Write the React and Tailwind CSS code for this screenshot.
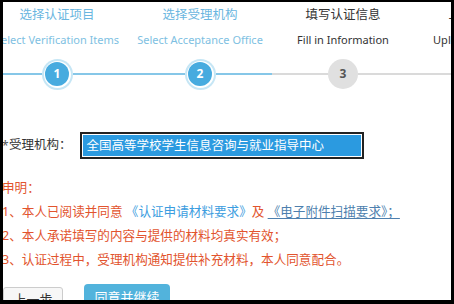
import React from "react";

const steps = [
  { zh: "选择认证项目", en: "Select Verification Items", n: 1, state: "done" },
  { zh: "选择受理机构", en: "Select Acceptance Office", n: 2, state: "done" },
  { zh: "填写认证信息", en: "Fill in Information", n: 3, state: "current" },
  { zh: "上传电子附件", en: "Upload Attachments", n: 4, state: "todo" },
];

function Step({ s, idx }) {
  const done = s.state === "done";
  const zhColor = done ? "text-[#6ab6e0]" : "text-[#333]";
  const enColor = done ? "text-[#7ebfe2]" : "text-[#333]";
  const leftLine = done ? "bg-[#86c7e8]" : "bg-[#dadada]";
  const rightLine = idx <= 1 ? "bg-[#86c7e8]" : "bg-[#dadada]";
  return (
    <div className="w-[143px] shrink-0 flex flex-col items-center">
      <div className={`mt-[4px] h-[18px] leading-[18px] text-[12.5px] whitespace-nowrap ${zhColor}`}>{s.zh}</div>
      <div className={`mt-[8px] h-[16px] leading-[16px] text-[11px] whitespace-nowrap ${enColor}`}>{s.en}</div>
      <div className="mt-[10px] h-[32px] w-full flex items-center">
        <div className={`flex-1 h-[2px] ${leftLine}`}></div>
        {done ? (
          <div className="w-[31px] h-[31px] rounded-full bg-[#c6e6f5] flex items-center justify-center">
            <div className="w-[27px] h-[27px] rounded-full bg-white flex items-center justify-center">
              <div className="w-[24px] h-[24px] rounded-full bg-[#47abdf] flex items-center justify-center text-white text-[12px] font-bold leading-none">
                {s.n}
              </div>
            </div>
          </div>
        ) : (
          <div className="w-[30px] h-[30px] rounded-full bg-[#e0e0e0] flex items-center justify-center text-[#555] text-[12px] font-bold leading-none">
            {s.n}
          </div>
        )}
        <div className={`flex-1 h-[2px] ${rightLine}`}></div>
      </div>
    </div>
  );
}

export default function App() {
  return (
    <div className="w-[454px] h-[304px] bg-black pt-[2px] pl-[3px] pr-[3px] pb-[4px]">
      <div
        className="w-full h-full bg-white overflow-hidden"
        style={{ fontFamily: '"Noto Sans", "Noto Sans CJK SC", sans-serif' }}
      >
        <div className="flex ml-[-17.5px]">
          {steps.map((s, i) => (
            <Step key={i} s={s} idx={i} />
          ))}
        </div>

        <div className="mt-[42px] flex items-center h-[27px]">
          <span className="w-[7px] text-[#555] text-[12px] leading-none ml-[-1px]">*</span>
          <span className="text-[12.5px] text-[#333] whitespace-nowrap">受理机构：</span>
          <div className="ml-[8px] w-[284px] h-[27px] border-2 border-[#222] bg-white p-[1px] shrink-0">
            <div className="h-full bg-[#2b9ae0] text-white text-[12.5px] leading-[21px] pl-[4px] whitespace-nowrap">
              全国高等学校学生信息咨询与就业指导中心
            </div>
          </div>
        </div>

        <div className="mt-[17px] ml-[-1px] text-[12.6px] leading-[24px] text-[#e2542e] whitespace-nowrap">
          <div>申明：</div>
          <div>
            1、本人已阅读并同意 <span className="text-[#3c9de0]">《认证申请材料要求》</span>及{" "}
            <span className="text-[#4d7fae] underline underline-offset-2">《电子附件扫描要求》；</span>
          </div>
          <div>2、本人承诺填写的内容与提供的材料均真实有效；</div>
          <div>3、认证过程中，受理机构通知提供补充材料，本人同意配合。</div>
        </div>

        <div className="mt-[12px] flex items-start">
          <button className="mt-[3px] w-[60px] h-[24px] border border-[#ccc] rounded-[3px] bg-[#f7f7f7] text-[13px] leading-[22px] text-[#333]">
            上一步
          </button>
          <button className="ml-[21px] w-[86px] h-[26px] rounded-[4px] bg-[#52b3dc] text-[13px] leading-[26px] text-white">
            同意并继续
          </button>
        </div>
      </div>
    </div>
  );
}
